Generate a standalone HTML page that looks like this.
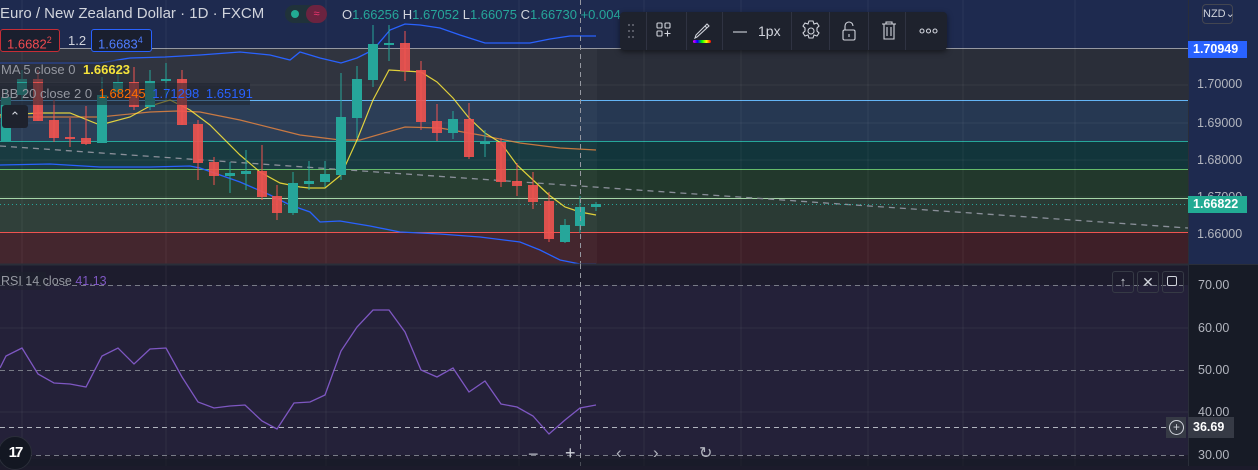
<!DOCTYPE html>
<html><head><meta charset="utf-8"><style>
body{margin:0;width:1258px;height:466px;overflow:hidden;background:#1c1b2b;font-family:"Liberation Sans",sans-serif;position:relative}
.abs{position:absolute}
.ax{position:absolute;left:1197px;font-size:12.5px;color:#b2b5be}
.tb{position:absolute;top:12px;height:38px;border-left:1px solid #2f3342}
</style></head><body>
<svg class="abs" style="left:0;top:0" width="1258" height="466">
<!-- main pane bands -->
<rect x="0" y="0" width="1188" height="48" fill="#1e2a4f"/>
<rect x="0" y="48" width="1188" height="52" fill="#2a2e39"/>
<rect x="0" y="100" width="1188" height="41" fill="#263852"/>
<rect x="0" y="141" width="1188" height="28" fill="#12353b"/>
<rect x="0" y="169" width="1188" height="29" fill="#22382c"/>
<rect x="0" y="198" width="1188" height="34" fill="#2a3a34"/>
<rect x="0" y="232" width="1188" height="32" fill="#3e1f28"/>
<rect x="0" y="48" width="597" height="216" fill="#ffffff" opacity="0.03"/>
<line x1="0" y1="48.5" x2="1188" y2="48.5" stroke="#9598a1"/>
<line x1="0" y1="100.5" x2="1188" y2="100.5" stroke="#64b5f6"/>
<line x1="0" y1="141.5" x2="1188" y2="141.5" stroke="#26a69a"/>
<line x1="0" y1="169.5" x2="1188" y2="169.5" stroke="#66bb6a"/>
<line x1="0" y1="198.5" x2="1188" y2="198.5" stroke="#a5d6a7"/>
<line x1="0" y1="232.5" x2="1188" y2="232.5" stroke="#ef5350"/>
<!-- grid -->
<g stroke="#ffffff" stroke-opacity="0.06">
<line x1="22" y1="0" x2="22" y2="466"/><line x1="166" y1="0" x2="166" y2="466"/><line x1="326" y1="0" x2="326" y2="466"/><line x1="519" y1="0" x2="519" y2="466"/><line x1="644" y1="0" x2="644" y2="466"/><line x1="741" y1="0" x2="741" y2="466"/><line x1="868" y1="0" x2="868" y2="466"/><line x1="963" y1="0" x2="963" y2="466"/><line x1="1075" y1="0" x2="1075" y2="466"/>
<line x1="0" y1="85" x2="1188" y2="85"/><line x1="0" y1="123" x2="1188" y2="123"/><line x1="0" y1="160" x2="1188" y2="160"/><line x1="0" y1="197" x2="1188" y2="197"/>
</g>
<!-- trend dashed -->
<line x1="0" y1="146" x2="1188" y2="228" stroke="#8a8f99" stroke-width="1.3" stroke-dasharray="6,5"/>
<line x1="0" y1="204.5" x2="1188" y2="204.5" stroke="#26a69a" stroke-dasharray="1,3"/>
<!-- BB -->
<polyline fill="none" stroke="#2962ff" stroke-width="1.3" points="0,63 100,63 130,58 165,57 200,55 240,52 270,55 290,60 300,52 320,58 341,63 357,58 373,50 390,30 405,24 420,25 440,28 460,35 485,43 530,43 550,39 570,36 596,36"/>
<polyline fill="none" stroke="#f0883e" stroke-opacity="0.8" stroke-width="1.2" points="0,117 100,117 150,112 177,111 200,112 240,120 280,130 300,135 340,140 360,140 405,127 440,128 480,135 520,143 560,148 596,150"/>
<polyline fill="none" stroke="#2962ff" stroke-width="1.3" points="0,165 50,164 100,167 150,167 190,166 200,168 240,182 270,195 290,205 310,212 320,222 340,221 370,226 400,232 440,234 480,237 520,242 540,250 560,260 580,264 596,264"/>
<polyline fill="none" stroke="#ffeb3b" stroke-opacity="0.85" stroke-width="1.2" points="0,115 40,113 70,113 100,125 130,117 150,106 170,100 190,110 210,125 240,155 260,172 280,183 300,187 309,188 325,188 341,175 357,140 373,100 389,70 405,71 421,72 437,82 453,98 469,118 485,133 501,143 517,165 533,180 549,195 565,207 580,212 596,215"/>
<!-- candles -->
<g id="c">
<g fill="#26a69a" stroke="#26a69a">
<line x1="6" y1="90" x2="6" y2="141"/><rect x="1" y="97" width="10" height="44" stroke="none"/>
<line x1="22" y1="70" x2="22" y2="100"/><rect x="17" y="79" width="10" height="16" stroke="none"/>
<line x1="102" y1="77" x2="102" y2="143"/><rect x="97" y="95" width="10" height="48" stroke="none"/>
<line x1="118" y1="65" x2="118" y2="95"/><rect x="113" y="82" width="10" height="10" stroke="none"/>
<line x1="150" y1="70" x2="150" y2="110"/><rect x="145" y="81" width="10" height="26" stroke="none"/>
<line x1="166" y1="63" x2="166" y2="100"/><rect x="161" y="79" width="10" height="2" stroke="none"/>
<line x1="230" y1="162" x2="230" y2="193"/><rect x="225" y="173" width="10" height="3" stroke="none"/>
<line x1="246" y1="150" x2="246" y2="190"/><rect x="241" y="171" width="10" height="3" stroke="none"/>
<line x1="293" y1="172" x2="293" y2="215"/><rect x="288" y="183" width="10" height="30" stroke="none"/>
<line x1="309" y1="161" x2="309" y2="190"/><rect x="304" y="181" width="10" height="3" stroke="none"/>
<line x1="325" y1="161" x2="325" y2="187"/><rect x="320" y="174" width="10" height="8" stroke="none"/>
<line x1="341" y1="73" x2="341" y2="180"/><rect x="336" y="117" width="10" height="58" stroke="none"/>
<line x1="357" y1="66" x2="357" y2="138"/><rect x="352" y="79" width="10" height="39" stroke="none"/>
<line x1="373" y1="25" x2="373" y2="87"/><rect x="368" y="44" width="10" height="36" stroke="none"/>
<line x1="389" y1="25" x2="389" y2="61"/><rect x="384" y="43" width="10" height="2" stroke="none"/>
<line x1="453" y1="111" x2="453" y2="139"/><rect x="448" y="119" width="10" height="14" stroke="none"/>
<line x1="485" y1="130" x2="485" y2="157"/><rect x="480" y="142" width="10" height="2" stroke="none"/>
<line x1="565" y1="219" x2="565" y2="243"/><rect x="560" y="225" width="10" height="17" stroke="none"/>
<line x1="580" y1="196" x2="580" y2="233"/><rect x="575" y="207" width="10" height="19" stroke="none"/>
<line x1="596" y1="202" x2="596" y2="211"/><rect x="591" y="204" width="10" height="3" stroke="none"/>
</g>
<g fill="#ef5350" stroke="#ef5350" fill-opacity="0.9">
<line x1="38" y1="70" x2="38" y2="121"/><rect x="33" y="79" width="10" height="42" stroke="none"/>
<line x1="54" y1="100" x2="54" y2="142"/><rect x="49" y="120" width="10" height="18" stroke="none"/>
<line x1="70" y1="118" x2="70" y2="147"/><rect x="65" y="137" width="10" height="2" stroke="none"/>
<line x1="86" y1="106" x2="86" y2="145"/><rect x="81" y="138" width="10" height="6" stroke="none"/>
<line x1="134" y1="67" x2="134" y2="110"/><rect x="129" y="82" width="10" height="25" stroke="none"/>
<line x1="182" y1="70" x2="182" y2="125"/><rect x="177" y="79" width="10" height="46" stroke="none"/>
<line x1="198" y1="120" x2="198" y2="180"/><rect x="193" y="124" width="10" height="39" stroke="none"/>
<line x1="214" y1="157" x2="214" y2="185"/><rect x="209" y="162" width="10" height="14" stroke="none"/>
<line x1="262" y1="145" x2="262" y2="200"/><rect x="257" y="171" width="10" height="26" stroke="none"/>
<line x1="277" y1="185" x2="277" y2="220"/><rect x="272" y="196" width="10" height="17" stroke="none"/>
<line x1="405" y1="31" x2="405" y2="81"/><rect x="400" y="43" width="10" height="28" stroke="none"/>
<line x1="421" y1="61" x2="421" y2="130"/><rect x="416" y="70" width="10" height="52" stroke="none"/>
<line x1="437" y1="104" x2="437" y2="141"/><rect x="432" y="121" width="10" height="12" stroke="none"/>
<line x1="469" y1="103" x2="469" y2="159"/><rect x="464" y="119" width="10" height="38" stroke="none"/>
<line x1="501" y1="138" x2="501" y2="187"/><rect x="496" y="142" width="10" height="40" stroke="none"/>
<line x1="517" y1="163" x2="517" y2="196"/><rect x="512" y="181" width="10" height="5" stroke="none"/>
<line x1="533" y1="172" x2="533" y2="209"/><rect x="528" y="185" width="10" height="17" stroke="none"/>
<line x1="549" y1="192" x2="549" y2="242"/><rect x="544" y="201" width="10" height="38" stroke="none"/>
</g></g>
<!-- crosshair -->
<line x1="580.5" y1="0" x2="580.5" y2="466" stroke="#9598a1" stroke-dasharray="5,4"/>
<!-- pane separator & RSI -->
<rect x="0" y="264" width="1188" height="202" fill="#1d1c2d"/>
<rect x="0" y="285" width="1188" height="170" fill="#242139"/>
<g stroke="#ffffff" stroke-opacity="0.06">
<line x1="22" y1="264" x2="22" y2="466"/><line x1="166" y1="264" x2="166" y2="466"/><line x1="326" y1="264" x2="326" y2="466"/><line x1="519" y1="264" x2="519" y2="466"/><line x1="644" y1="264" x2="644" y2="466"/><line x1="741" y1="264" x2="741" y2="466"/><line x1="868" y1="264" x2="868" y2="466"/><line x1="963" y1="264" x2="963" y2="466"/><line x1="1075" y1="264" x2="1075" y2="466"/>
<line x1="0" y1="328" x2="1188" y2="328"/><line x1="0" y1="412" x2="1188" y2="412"/>
</g>
<line x1="0" y1="264.5" x2="1258" y2="264.5" stroke="#2a2e39" stroke-width="2"/>
<g stroke="#787b86" stroke-dasharray="5,4"><line x1="0" y1="285.5" x2="1188" y2="285.5"/><line x1="0" y1="370.5" x2="1188" y2="370.5"/><line x1="0" y1="455.5" x2="1188" y2="455.5"/></g>
<line x1="0" y1="427.5" x2="1188" y2="427.5" stroke="#b2b5be" stroke-dasharray="5,4"/>
<line x1="580.5" y1="264" x2="580.5" y2="466" stroke="#9598a1" stroke-dasharray="5,4"/>
<polyline fill="none" stroke="#7e57c2" stroke-width="1.3" points="0,368 6,356 22,348 38,374 54,383 70,384 86,387 102,356 118,348 134,364 150,349 166,348 182,377 198,402 214,408 230,406 245,405 262,421 277,429 294,403 310,402 325,395 341,351 357,327 373,310 389,310 405,332 421,370 437,377 453,368 469,392 485,381 501,404 517,407 533,416 549,434 565,420 580,408 596,405"/>
<rect x="0" y="459" width="1188" height="7" fill="#171a26" opacity="0.6"/>
<!-- axis -->
<rect x="1188" y="0" width="70" height="264" fill="#1e2a4f"/>
<rect x="1188" y="265" width="70" height="201" fill="#171b26"/>
<line x1="1188.5" y1="0" x2="1188.5" y2="466" stroke="#2a2e39"/>
</svg>

<!-- header -->
<div class="abs" style="left:0;top:5px;font-size:15px;color:#d1d4dc;white-space:nowrap">Euro / New Zealand Dollar · 1D · FXCM</div>
<div class="abs" style="left:285px;top:5px;width:42px;height:18px;border-radius:9px;background:#20323a"></div>
<div class="abs" style="left:291px;top:10px;width:8px;height:8px;border-radius:4px;background:#22ab94"></div>
<div class="abs" style="left:306px;top:5px;width:21px;height:18px;border-radius:9px;background:#6b2340;color:#f23672;font-size:11px;text-align:center;line-height:18px">≈</div>
<div class="abs" style="left:342px;top:7px;font-size:13px;color:#26a69a;white-space:nowrap"><span style="color:#d1d4dc">O</span>1.66256 <span style="color:#d1d4dc">H</span>1.67052 <span style="color:#d1d4dc">L</span>1.66075 <span style="color:#d1d4dc">C</span>1.66730 +0.004</div>
<div class="abs" style="left:0;top:29px;width:60px;height:23px;background:#1a1f2e;border:1px solid #c62d36;border-radius:3px;box-sizing:border-box;color:#f04a50;font-size:13px;line-height:21px;padding-left:6px">1.6682<sup style="font-size:9px">2</sup></div>
<div class="abs" style="left:68px;top:33px;color:#d1d4dc;font-size:13px">1.2</div>
<div class="abs" style="left:91px;top:29px;width:61px;height:23px;background:#1a1f2e;border:1px solid #2962ff;border-radius:3px;box-sizing:border-box;color:#4f7dff;font-size:13px;line-height:21px;padding-left:6px">1.6683<sup style="font-size:9px">4</sup></div>
<div class="abs" style="left:0;top:60px;width:130px;height:22px;background:#2a2e39;opacity:.55"></div>
<div class="abs" style="left:1px;top:62px;font-size:13px;color:#9598a1;white-space:nowrap">MA 5 close 0 <span style="color:#f5e33b;font-weight:bold;margin-left:4px">1.66623</span></div>
<div class="abs" style="left:0;top:83px;width:250px;height:22px;background:#1e222d;opacity:.55"></div>
<div class="abs" style="left:1px;top:86px;font-size:13px;color:#9598a1;white-space:nowrap">BB 20 close 2 0 <span style="color:#ff6d00;margin-left:3px">1.68245</span> <span style="color:#2962ff;margin-left:3px">1.71298</span> <span style="color:#2962ff;margin-left:3px">1.65191</span></div>
<div class="abs" style="left:2px;top:105px;width:26px;height:23px;background:#1e222d;border-radius:3px;color:#d1d4dc;font-size:13px;text-align:center;line-height:23px">⌃</div>

<!-- toolbar -->
<div class="abs" style="left:620px;top:12px;width:327px;height:38px;background:#1e222d;border-radius:4px;box-shadow:0 2px 6px rgba(0,0,0,.5)"></div>
<svg class="abs" style="left:620px;top:12px" width="327" height="38">
<g fill="#6a6d78"><circle cx="9" cy="13" r="1"/><circle cx="13" cy="13" r="1"/><circle cx="9" cy="19" r="1"/><circle cx="13" cy="19" r="1"/><circle cx="9" cy="25" r="1"/><circle cx="13" cy="25" r="1"/></g>
<g stroke="#d1d4dc" fill="none" stroke-width="1.1">
<rect x="37" y="11" width="5" height="5" rx="1"/><rect x="45" y="11" width="5" height="5" rx="1"/><rect x="37" y="19" width="5" height="5" rx="1"/><path d="M47.5 18.5v6M44.5 21.5h6"/>
<path d="M77 25l-2 1 1-3 11-11 2 2z M85 14l2 2"/>
<path d="M113 20h14"/>
<circle cx="191" cy="19" r="3"/><path d="M189 9h4l1 3 3-1 2 3-2 2v3l2 2-2 3-3-1-1 3h-4l-1-3-3 1-2-3 2-2v-3l-2-2 2-3 3 1z"/>
<rect x="223" y="18" width="12" height="10" rx="1.5"/><path d="M225 18v-4a4 4 0 0 1 8 0"/><path d="M229 22v3"/>
<path d="M262 12h14M266 12v-2h6v2M264 12v15h10v-15M267 15v9M271 15v9"/>
<circle cx="302" cy="19" r="2"/><circle cx="308.5" cy="19" r="2"/><circle cx="315" cy="19" r="2"/>
</g>
<defs><linearGradient id="rb"><stop offset="0" stop-color="#f0f"/><stop offset=".25" stop-color="#00f"/><stop offset=".5" stop-color="#0f0"/><stop offset=".75" stop-color="#ff0"/><stop offset="1" stop-color="#f00"/></linearGradient></defs>
<rect x="73" y="28" width="18" height="3" rx="1.5" fill="url(#rb)"/>
</svg>
<div class="abs" style="left:758px;top:23px;color:#d1d4dc;font-size:14px">1px</div>
<div class="tb" style="left:646px"></div><div class="tb" style="left:686px"></div><div class="tb" style="left:722px"></div><div class="tb" style="left:791px"></div><div class="tb" style="left:829px"></div><div class="tb" style="left:868px"></div><div class="tb" style="left:905px"></div>

<!-- axis labels -->
<div class="abs" style="left:1202px;top:4px;width:29px;height:18px;border:1px solid #434651;border-radius:4px;color:#d1d4dc;font-size:11px;line-height:18px;text-align:center">NZD⌄</div>
<div class="abs" style="left:1188px;top:41px;width:59px;height:17px;background:#2962ff;color:#fff;font-size:12.5px;font-weight:bold;line-height:17px;padding-left:5px;box-sizing:border-box">1.70949</div>
<div class="ax" style="top:77px">1.70000</div>
<div class="ax" style="top:116px">1.69000</div>
<div class="ax" style="top:153px">1.68000</div>
<div class="ax" style="top:190px">1.67000</div>
<div class="abs" style="left:1188px;top:196px;width:59px;height:17px;background:#22ab94;color:#fff;font-size:12.5px;font-weight:bold;line-height:17px;padding-left:5px;box-sizing:border-box">1.66822</div>
<div class="ax" style="top:227px">1.66000</div>
<div class="ax" style="top:278px;left:1198px">70.00</div>
<div class="ax" style="top:321px;left:1198px">60.00</div>
<div class="ax" style="top:363px;left:1198px">50.00</div>
<div class="ax" style="top:405px;left:1198px">40.00</div>
<div class="ax" style="top:448px;left:1198px">30.00</div>
<div class="abs" style="left:1166px;top:417px;width:20px;height:21px;background:#363a45"></div>
<div class="abs" style="left:1169px;top:420px;width:13px;height:13px;border:1.2px solid #d1d4dc;border-radius:50%;color:#d1d4dc;font-size:12px;line-height:13px;text-align:center">+</div>
<div class="abs" style="left:1188px;top:417px;width:46px;height:21px;background:#363a45;color:#fff;font-weight:bold;font-size:12.5px;line-height:21px;padding-left:5px;box-sizing:border-box">36.69</div>

<!-- RSI label + buttons -->
<div class="abs" style="left:0;top:272px;width:46px;height:18px;background:#1e222d;opacity:.5"></div>
<div class="abs" style="left:1px;top:274px;font-size:12.5px;color:#9598a1;white-space:nowrap">RSI 14 close <span style="color:#7e57c2">41.13</span></div>
<div class="abs" style="left:1112px;top:271px;width:20px;height:20px;border:1px solid #363a45;border-radius:3px;color:#d1d4dc;font-size:13px;text-align:center;line-height:20px">↑</div>
<div class="abs" style="left:1137px;top:271px;width:20px;height:20px;border:1px solid #363a45;border-radius:3px;color:#d1d4dc;font-size:14px;text-align:center;line-height:20px">✕</div>
<div class="abs" style="left:1162px;top:271px;width:20px;height:20px;border:1px solid #363a45;border-radius:3px"></div>
<div class="abs" style="left:1167px;top:276px;width:10px;height:10px;border:1.3px solid #d1d4dc;border-radius:2px;box-sizing:border-box"></div>

<!-- bottom controls -->
<div class="abs" style="left:-2px;top:436px;width:32px;height:32px;border-radius:50%;background:#131722;border:1px solid #2a2e39;color:#fff;font-weight:bold;font-size:15px;line-height:32px;text-align:center;letter-spacing:-2px">17</div>
<div class="abs" style="left:528px;top:444px;font-size:18px;color:#b2b5be">−</div>
<div class="abs" style="left:565px;top:443px;font-size:18px;color:#d1d4dc">+</div>
<div class="abs" style="left:616px;top:443px;font-size:17px;color:#b2b5be">‹</div>
<div class="abs" style="left:653px;top:443px;font-size:17px;color:#b2b5be">›</div>
<div class="abs" style="left:699px;top:443px;font-size:16px;color:#b2b5be">↻</div>
</body></html>
